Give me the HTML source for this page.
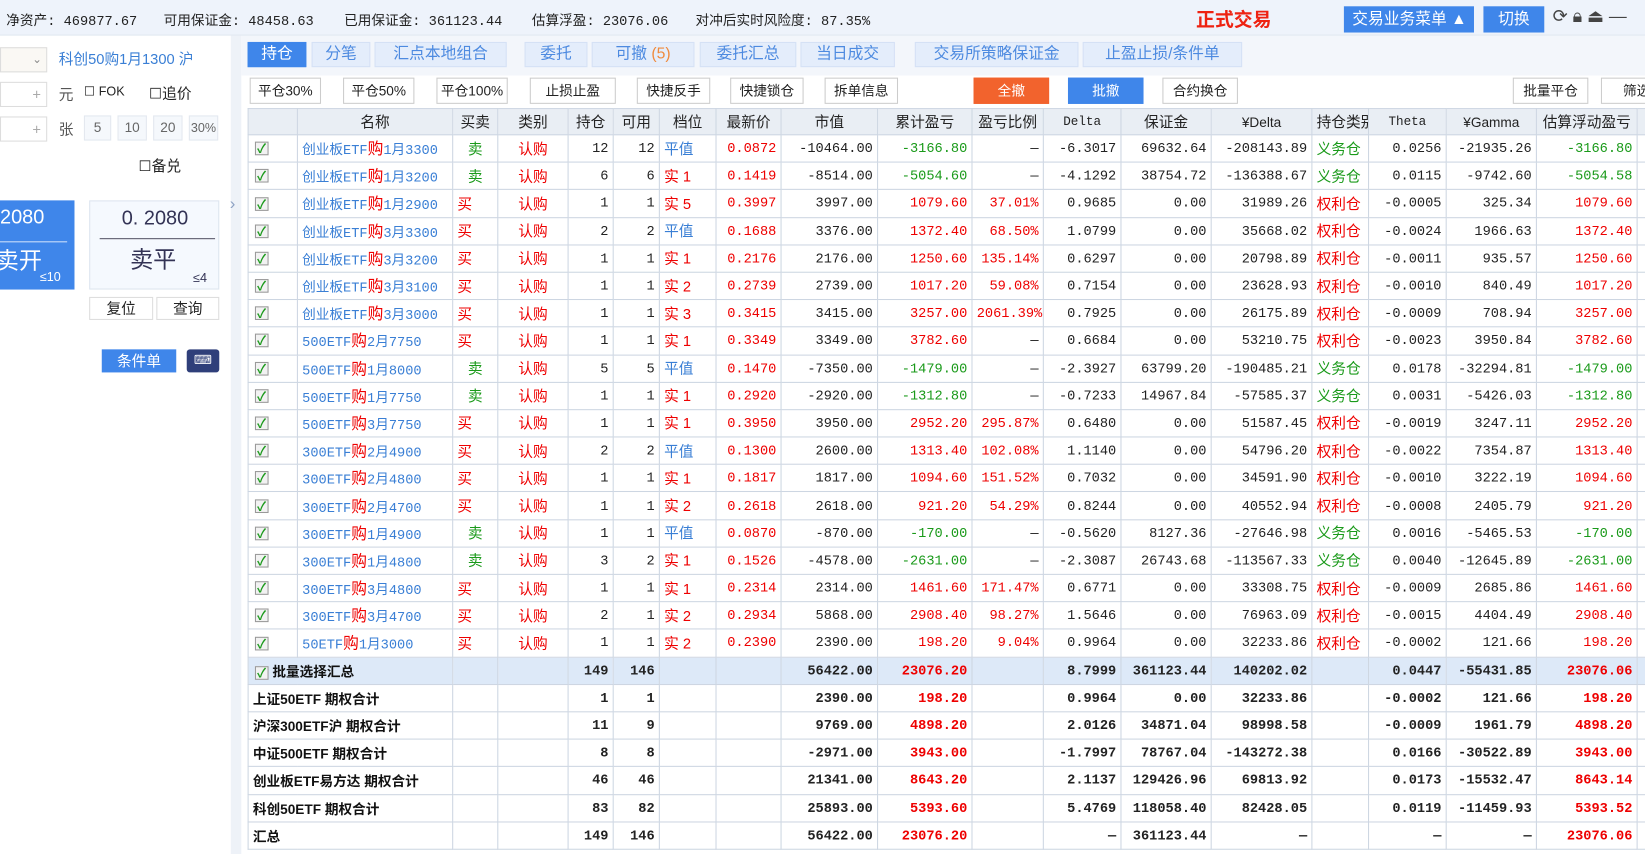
<!DOCTYPE html>
<html><head><meta charset="utf-8"><style>
*{margin:0;padding:0;box-sizing:border-box}
html,body{width:1645px;height:854px;overflow:hidden;background:#fff}
#w{position:absolute;left:0;top:0;width:1568px;height:814px;transform:scale(1.0491);transform-origin:0 0;font-family:"Liberation Sans","Noto Sans CJK SC",sans-serif;font-size:14px;color:#222;overflow:hidden}
.top{position:absolute;left:0;top:0;width:1568px;height:34px;background:#eef3fb;border-bottom:1px solid #dfe6f0}
.top span{position:absolute;top:9px;font-size:13px;font-family:"Liberation Mono","Noto Sans CJK SC",monospace}
.a{position:absolute}
.tab{position:absolute;top:40px;height:24px;background:#e4edfb;border:1px solid #d5e1f5;color:#4d8ae0;font-size:15px;text-align:center;line-height:22px}
.btn{position:absolute;top:74px;height:25px;border:1px solid #ccc;background:#fff;font-size:13px;text-align:center;line-height:23px;color:#222}
table{position:absolute;left:236px;top:103px;width:1424px;border-collapse:collapse;table-layout:fixed;font-family:"Liberation Mono","Noto Sans CJK SC",monospace;font-size:13px}
td{height:26.2px;border:1px solid #cdd6e2;text-align:right;padding:0 4px;white-space:nowrap;overflow:hidden}
tr.h td{background:#e9eef4;text-align:center;font-family:"Liberation Sans","Noto Sans CJK SC",sans-serif;font-size:14px;height:25px}
td.c{text-align:left;padding-left:6px}
td.c i{display:inline-block;width:13px;height:13px;border:1px solid #999;background:#f2f2f2;vertical-align:middle;position:relative}
td.c i:after{content:"✓";position:absolute;left:1px;top:-3px;color:#1c9a1c;font-style:normal;font-weight:bold;font-size:12px}
td.n{text-align:left;color:#3a7fd5;font-family:"Liberation Mono","Noto Sans CJK SC",monospace;font-size:13px}
td.n em{font-style:normal;color:#e00;font-size:15px}
.g{color:#1a9a1a}.r{color:#e00}.b{color:#3a7fd5}
td.m{text-align:center;font-family:"Liberation Sans","Noto Sans CJK SC",sans-serif;font-size:14px}
td.l{text-align:left;font-family:"Liberation Sans","Noto Sans CJK SC",sans-serif;font-size:14px}
tr.s td{font-weight:bold}
tr.s td.t{text-align:left;font-family:"Liberation Sans","Noto Sans CJK SC",sans-serif;color:#111}
tr.sel td{background:#dde9f8}
</style></head><body><div id="w">
<div class="top">
<span style="left:6px">净资产: 469877.67</span>
<span style="left:156px">可用保证金: 48458.63</span>
<span style="left:328px">已用保证金: 361123.44</span>
<span style="left:507px">估算浮盈: 23076.06</span>
<span style="left:663px">对冲后实时风险度: 87.35%</span>
<span style="left:1140px;top:5px;color:#e21;font-size:18px;font-weight:bold;font-family:'Liberation Sans','Noto Sans CJK SC',sans-serif">正式交易</span>
</div>
<div class="a" style="left:1281px;top:6px;width:124px;height:25px;background:#3f86ea;color:#fff;font-size:15px;line-height:25px;padding-left:8px">交易业务菜单 ▲</div>
<div class="a" style="left:1414px;top:6px;width:58px;height:25px;background:#3f86ea;color:#fff;font-size:15px;line-height:25px;text-align:center">切换</div>
<div class="a" style="left:1480px;top:6px;font-size:17px;color:#444">⟳ 🔒︎ ⏏ —</div>
<div class="a" style="left:0;top:34px;width:220px;height:820px;background:#fff"></div>
<div class="a" style="left:220px;top:34px;width:10px;height:820px;background:#eef2f8"></div>
<div class="a" style="left:219px;top:186px;color:#8ea2c4;font-size:16px">›</div>
<div class="a" style="left:0;top:45px;width:45px;height:24px;border:1px solid #ddd;background:#faf8f4;color:#888;font-size:11px;text-align:right;padding-right:4px;line-height:22px">⌄</div>
<div class="a" style="left:56px;top:46px;color:#3a7fd5;font-size:14px">科创50购1月1300 沪</div>
<div class="a" style="left:0;top:78px;width:45px;height:24px;border:1px solid #ddd;color:#aaa;text-align:right;padding-right:5px;line-height:22px">+</div>
<div class="a" style="left:56px;top:80px;color:#555">元</div>
<div class="a" style="left:80px;top:80px;font-size:12px">☐ FOK</div>
<div class="a" style="left:142px;top:79px;font-size:14px">☐追价</div>
<div class="a" style="left:0;top:111px;width:45px;height:24px;border:1px solid #ddd;color:#aaa;text-align:right;padding-right:5px;line-height:22px">+</div>
<div class="a" style="left:56px;top:113px;color:#555">张</div>
<div class="a" style="left:80px;top:110px;width:26px;height:24px;border:1px solid #e3e8ef;background:#f5f8fc;color:#666;font-size:13px;text-align:center;line-height:22px">5</div>
<div class="a" style="left:112px;top:110px;width:28px;height:24px;border:1px solid #e3e8ef;background:#f5f8fc;color:#666;font-size:13px;text-align:center;line-height:22px">10</div>
<div class="a" style="left:146px;top:110px;width:28px;height:24px;border:1px solid #e3e8ef;background:#f5f8fc;color:#666;font-size:13px;text-align:center;line-height:22px">20</div>
<div class="a" style="left:180px;top:110px;width:28px;height:24px;border:1px solid #e3e8ef;background:#f5f8fc;color:#666;font-size:12px;text-align:center;line-height:22px">30%</div>
<div class="a" style="left:132px;top:148px;font-size:14px">☐备兑</div>
<div class="a" style="left:0;top:191px;width:71px;height:85px;background:#3f86ea;color:#fff">
<div style="position:absolute;left:0;top:6px;font-size:19px">2080</div>
<div style="position:absolute;left:0;top:39px;width:64px;border-top:1px solid #cfe0fa"></div>
<div style="position:absolute;left:-4px;top:40px;font-size:22px">卖开</div>
<div style="position:absolute;left:38px;top:66px;font-size:12px">≤10</div></div>
<div class="a" style="left:85px;top:191px;width:124px;height:85px;background:#f5f9fe;border:1px solid #dde5ef;color:#335">
<div style="position:absolute;left:30px;top:6px;font-size:19px">0. 2080</div>
<div style="position:absolute;left:9px;top:35px;width:110px;border-top:1px solid #556"></div>
<div style="position:absolute;left:38px;top:38px;font-size:22px">卖平</div>
<div style="position:absolute;left:98px;top:66px;font-size:12px">≤4</div></div>
<div class="a" style="left:85px;top:283px;width:61px;height:22px;border:1px solid #ddd;text-align:center;line-height:20px;font-size:14px">复位</div>
<div class="a" style="left:149px;top:283px;width:60px;height:22px;border:1px solid #ddd;text-align:center;line-height:20px;font-size:14px">查询</div>
<div class="a" style="left:97px;top:333px;width:71px;height:22px;background:#3f86ea;color:#fff;text-align:center;line-height:22px;font-size:14px">条件单</div>
<div class="a" style="left:178px;top:333px;width:31px;height:22px;background:#2f3f7a;border-radius:3px;color:#fff;text-align:center;line-height:20px;font-size:12px">⌨</div>
<div class="a" style="left:230px;top:34px;width:1415px;height:38px;background:#f3f6fb"></div>
<div class="tab" style="left:236px;width:56px;background:#3f86ea;color:#fff;border-color:#3f86ea">持仓</div>
<div class="tab" style="left:297px;width:56px">分笔</div>
<div class="tab" style="left:357px;width:126px">汇点本地组合</div>
<div class="tab" style="left:500px;width:60px">委托</div>
<div class="tab" style="left:564px;width:98px">可撤 <span style="color:#f08a3c">(5)</span></div>
<div class="tab" style="left:667px;width:92px">委托汇总</div>
<div class="tab" style="left:763px;width:90px">当日成交</div>
<div class="tab" style="left:872px;width:156px">交易所策略保证金</div>
<div class="tab" style="left:1032px;width:152px">止盈止损/条件单</div>
<div class="btn" style="left:238px;width:68px">平仓30%</div>
<div class="btn" style="left:327px;width:68px">平仓50%</div>
<div class="btn" style="left:416px;width:68px">平仓100%</div>
<div class="btn" style="left:505px;width:82px">止损止盈</div>
<div class="btn" style="left:607px;width:70px">快捷反手</div>
<div class="btn" style="left:696px;width:70px">快捷锁仓</div>
<div class="btn" style="left:786px;width:70px">拆单信息</div>
<div class="btn" style="left:928px;width:72px;background:#f2632d;color:#fff;border-color:#f2632d">全撤</div>
<div class="btn" style="left:1018px;width:72px;background:#3f86ea;color:#fff;border-color:#3f86ea">批撤</div>
<div class="btn" style="left:1108px;width:72px">合约换仓</div>
<div class="btn" style="left:1442px;width:72px">批量平仓</div>
<div class="btn" style="left:1526px;width:72px;text-align:left;padding-left:20px">筛选</div>
<table>
<colgroup><col style="width:47px"><col style="width:148px"><col style="width:43px"><col style="width:67px"><col style="width:43px"><col style="width:44px"><col style="width:54px"><col style="width:62px"><col style="width:92px"><col style="width:90px"><col style="width:68px"><col style="width:74px"><col style="width:86px"><col style="width:96px"><col style="width:54px"><col style="width:74px"><col style="width:86px"><col style="width:96px"><col style="width:100px"></colgroup>
<tr class="h"><td></td><td>名称</td><td>买卖</td><td>类别</td><td>持仓</td><td>可用</td><td>档位</td><td>最新价</td><td>市值</td><td>累计盈亏</td><td>盈亏比例</td><td style="font-family:'Liberation Mono',monospace;font-size:12px">Delta</td><td>保证金</td><td style="font-size:13px">¥Delta</td><td>持仓类别</td><td style="font-family:'Liberation Mono',monospace;font-size:12px">Theta</td><td style="font-size:13px">¥Gamma</td><td>估算浮动盈亏</td><td></td></tr>
<tr><td class="c"><i></i></td><td class="n">创业板ETF<em>购</em>1月3300</td><td class="m g">卖</td><td class="m r">认购</td><td>12</td><td>12</td><td class="l b">平值</td><td class="r">0.0872</td><td>-10464.00</td><td class="g">-3166.80</td><td>—</td><td>-6.3017</td><td>69632.64</td><td>-208143.89</td><td class="l g">义务仓</td><td>0.0256</td><td>-21935.26</td><td class="g">-3166.80</td><td></td></tr>
<tr><td class="c"><i></i></td><td class="n">创业板ETF<em>购</em>1月3200</td><td class="m g">卖</td><td class="m r">认购</td><td>6</td><td>6</td><td class="l r">实 1</td><td class="r">0.1419</td><td>-8514.00</td><td class="g">-5054.60</td><td>—</td><td>-4.1292</td><td>38754.72</td><td>-136388.67</td><td class="l g">义务仓</td><td>0.0115</td><td>-9742.60</td><td class="g">-5054.58</td><td></td></tr>
<tr><td class="c"><i></i></td><td class="n">创业板ETF<em>购</em>1月2900</td><td class="l r">买</td><td class="m r">认购</td><td>1</td><td>1</td><td class="l r">实 5</td><td class="r">0.3997</td><td>3997.00</td><td class="r">1079.60</td><td class="r">37.01%</td><td>0.9685</td><td>0.00</td><td>31989.26</td><td class="l r">权利仓</td><td>-0.0005</td><td>325.34</td><td class="r">1079.60</td><td></td></tr>
<tr><td class="c"><i></i></td><td class="n">创业板ETF<em>购</em>3月3300</td><td class="l r">买</td><td class="m r">认购</td><td>2</td><td>2</td><td class="l b">平值</td><td class="r">0.1688</td><td>3376.00</td><td class="r">1372.40</td><td class="r">68.50%</td><td>1.0799</td><td>0.00</td><td>35668.02</td><td class="l r">权利仓</td><td>-0.0024</td><td>1966.63</td><td class="r">1372.40</td><td></td></tr>
<tr><td class="c"><i></i></td><td class="n">创业板ETF<em>购</em>3月3200</td><td class="l r">买</td><td class="m r">认购</td><td>1</td><td>1</td><td class="l r">实 1</td><td class="r">0.2176</td><td>2176.00</td><td class="r">1250.60</td><td class="r">135.14%</td><td>0.6297</td><td>0.00</td><td>20798.89</td><td class="l r">权利仓</td><td>-0.0011</td><td>935.57</td><td class="r">1250.60</td><td></td></tr>
<tr><td class="c"><i></i></td><td class="n">创业板ETF<em>购</em>3月3100</td><td class="l r">买</td><td class="m r">认购</td><td>1</td><td>1</td><td class="l r">实 2</td><td class="r">0.2739</td><td>2739.00</td><td class="r">1017.20</td><td class="r">59.08%</td><td>0.7154</td><td>0.00</td><td>23628.93</td><td class="l r">权利仓</td><td>-0.0010</td><td>840.49</td><td class="r">1017.20</td><td></td></tr>
<tr><td class="c"><i></i></td><td class="n">创业板ETF<em>购</em>3月3000</td><td class="l r">买</td><td class="m r">认购</td><td>1</td><td>1</td><td class="l r">实 3</td><td class="r">0.3415</td><td>3415.00</td><td class="r">3257.00</td><td class="r">2061.39%</td><td>0.7925</td><td>0.00</td><td>26175.89</td><td class="l r">权利仓</td><td>-0.0009</td><td>708.94</td><td class="r">3257.00</td><td></td></tr>
<tr><td class="c"><i></i></td><td class="n">500ETF<em>购</em>2月7750</td><td class="l r">买</td><td class="m r">认购</td><td>1</td><td>1</td><td class="l r">实 1</td><td class="r">0.3349</td><td>3349.00</td><td class="r">3782.60</td><td>—</td><td>0.6684</td><td>0.00</td><td>53210.75</td><td class="l r">权利仓</td><td>-0.0023</td><td>3950.84</td><td class="r">3782.60</td><td></td></tr>
<tr><td class="c"><i></i></td><td class="n">500ETF<em>购</em>1月8000</td><td class="m g">卖</td><td class="m r">认购</td><td>5</td><td>5</td><td class="l b">平值</td><td class="r">0.1470</td><td>-7350.00</td><td class="g">-1479.00</td><td>—</td><td>-2.3927</td><td>63799.20</td><td>-190485.21</td><td class="l g">义务仓</td><td>0.0178</td><td>-32294.81</td><td class="g">-1479.00</td><td></td></tr>
<tr><td class="c"><i></i></td><td class="n">500ETF<em>购</em>1月7750</td><td class="m g">卖</td><td class="m r">认购</td><td>1</td><td>1</td><td class="l r">实 1</td><td class="r">0.2920</td><td>-2920.00</td><td class="g">-1312.80</td><td>—</td><td>-0.7233</td><td>14967.84</td><td>-57585.37</td><td class="l g">义务仓</td><td>0.0031</td><td>-5426.03</td><td class="g">-1312.80</td><td></td></tr>
<tr><td class="c"><i></i></td><td class="n">500ETF<em>购</em>3月7750</td><td class="l r">买</td><td class="m r">认购</td><td>1</td><td>1</td><td class="l r">实 1</td><td class="r">0.3950</td><td>3950.00</td><td class="r">2952.20</td><td class="r">295.87%</td><td>0.6480</td><td>0.00</td><td>51587.45</td><td class="l r">权利仓</td><td>-0.0019</td><td>3247.11</td><td class="r">2952.20</td><td></td></tr>
<tr><td class="c"><i></i></td><td class="n">300ETF<em>购</em>2月4900</td><td class="l r">买</td><td class="m r">认购</td><td>2</td><td>2</td><td class="l b">平值</td><td class="r">0.1300</td><td>2600.00</td><td class="r">1313.40</td><td class="r">102.08%</td><td>1.1140</td><td>0.00</td><td>54796.20</td><td class="l r">权利仓</td><td>-0.0022</td><td>7354.87</td><td class="r">1313.40</td><td></td></tr>
<tr><td class="c"><i></i></td><td class="n">300ETF<em>购</em>2月4800</td><td class="l r">买</td><td class="m r">认购</td><td>1</td><td>1</td><td class="l r">实 1</td><td class="r">0.1817</td><td>1817.00</td><td class="r">1094.60</td><td class="r">151.52%</td><td>0.7032</td><td>0.00</td><td>34591.90</td><td class="l r">权利仓</td><td>-0.0010</td><td>3222.19</td><td class="r">1094.60</td><td></td></tr>
<tr><td class="c"><i></i></td><td class="n">300ETF<em>购</em>2月4700</td><td class="l r">买</td><td class="m r">认购</td><td>1</td><td>1</td><td class="l r">实 2</td><td class="r">0.2618</td><td>2618.00</td><td class="r">921.20</td><td class="r">54.29%</td><td>0.8244</td><td>0.00</td><td>40552.94</td><td class="l r">权利仓</td><td>-0.0008</td><td>2405.79</td><td class="r">921.20</td><td></td></tr>
<tr><td class="c"><i></i></td><td class="n">300ETF<em>购</em>1月4900</td><td class="m g">卖</td><td class="m r">认购</td><td>1</td><td>1</td><td class="l b">平值</td><td class="r">0.0870</td><td>-870.00</td><td class="g">-170.00</td><td>—</td><td>-0.5620</td><td>8127.36</td><td>-27646.98</td><td class="l g">义务仓</td><td>0.0016</td><td>-5465.53</td><td class="g">-170.00</td><td></td></tr>
<tr><td class="c"><i></i></td><td class="n">300ETF<em>购</em>1月4800</td><td class="m g">卖</td><td class="m r">认购</td><td>3</td><td>2</td><td class="l r">实 1</td><td class="r">0.1526</td><td>-4578.00</td><td class="g">-2631.00</td><td>—</td><td>-2.3087</td><td>26743.68</td><td>-113567.33</td><td class="l g">义务仓</td><td>0.0040</td><td>-12645.89</td><td class="g">-2631.00</td><td></td></tr>
<tr><td class="c"><i></i></td><td class="n">300ETF<em>购</em>3月4800</td><td class="l r">买</td><td class="m r">认购</td><td>1</td><td>1</td><td class="l r">实 1</td><td class="r">0.2314</td><td>2314.00</td><td class="r">1461.60</td><td class="r">171.47%</td><td>0.6771</td><td>0.00</td><td>33308.75</td><td class="l r">权利仓</td><td>-0.0009</td><td>2685.86</td><td class="r">1461.60</td><td></td></tr>
<tr><td class="c"><i></i></td><td class="n">300ETF<em>购</em>3月4700</td><td class="l r">买</td><td class="m r">认购</td><td>2</td><td>1</td><td class="l r">实 2</td><td class="r">0.2934</td><td>5868.00</td><td class="r">2908.40</td><td class="r">98.27%</td><td>1.5646</td><td>0.00</td><td>76963.09</td><td class="l r">权利仓</td><td>-0.0015</td><td>4404.49</td><td class="r">2908.40</td><td></td></tr>
<tr><td class="c"><i></i></td><td class="n">50ETF<em>购</em>1月3000</td><td class="l r">买</td><td class="m r">认购</td><td>1</td><td>1</td><td class="l r">实 2</td><td class="r">0.2390</td><td>2390.00</td><td class="r">198.20</td><td class="r">9.04%</td><td>0.9964</td><td>0.00</td><td>32233.86</td><td class="l r">权利仓</td><td>-0.0002</td><td>121.66</td><td class="r">198.20</td><td></td></tr>
<tr class="s sel"><td class="t c" colspan="2"><i></i> 批量选择汇总</td><td></td><td></td><td>149</td><td>146</td><td></td><td></td><td>56422.00</td><td class="r">23076.20</td><td></td><td>8.7999</td><td>361123.44</td><td>140202.02</td><td></td><td>0.0447</td><td>-55431.85</td><td class="r">23076.06</td><td></td></tr>
<tr class="s"><td class="t" colspan="2">上证50ETF 期权合计</td><td></td><td></td><td>1</td><td>1</td><td></td><td></td><td>2390.00</td><td class="r">198.20</td><td></td><td>0.9964</td><td>0.00</td><td>32233.86</td><td></td><td>-0.0002</td><td>121.66</td><td class="r">198.20</td><td></td></tr>
<tr class="s"><td class="t" colspan="2">沪深300ETF沪 期权合计</td><td></td><td></td><td>11</td><td>9</td><td></td><td></td><td>9769.00</td><td class="r">4898.20</td><td></td><td>2.0126</td><td>34871.04</td><td>98998.58</td><td></td><td>-0.0009</td><td>1961.79</td><td class="r">4898.20</td><td></td></tr>
<tr class="s"><td class="t" colspan="2">中证500ETF 期权合计</td><td></td><td></td><td>8</td><td>8</td><td></td><td></td><td>-2971.00</td><td class="r">3943.00</td><td></td><td>-1.7997</td><td>78767.04</td><td>-143272.38</td><td></td><td>0.0166</td><td>-30522.89</td><td class="r">3943.00</td><td></td></tr>
<tr class="s"><td class="t" colspan="2">创业板ETF易方达 期权合计</td><td></td><td></td><td>46</td><td>46</td><td></td><td></td><td>21341.00</td><td class="r">8643.20</td><td></td><td>2.1137</td><td>129426.96</td><td>69813.92</td><td></td><td>0.0173</td><td>-15532.47</td><td class="r">8643.14</td><td></td></tr>
<tr class="s"><td class="t" colspan="2">科创50ETF 期权合计</td><td></td><td></td><td>83</td><td>82</td><td></td><td></td><td>25893.00</td><td class="r">5393.60</td><td></td><td>5.4769</td><td>118058.40</td><td>82428.05</td><td></td><td>0.0119</td><td>-11459.93</td><td class="r">5393.52</td><td></td></tr>
<tr class="s"><td class="t" colspan="2">汇总</td><td></td><td></td><td>149</td><td>146</td><td></td><td></td><td>56422.00</td><td class="r">23076.20</td><td></td><td>—</td><td>361123.44</td><td>—</td><td></td><td>—</td><td>—</td><td class="r">23076.06</td><td></td></tr>
</table>
</div></body></html>
